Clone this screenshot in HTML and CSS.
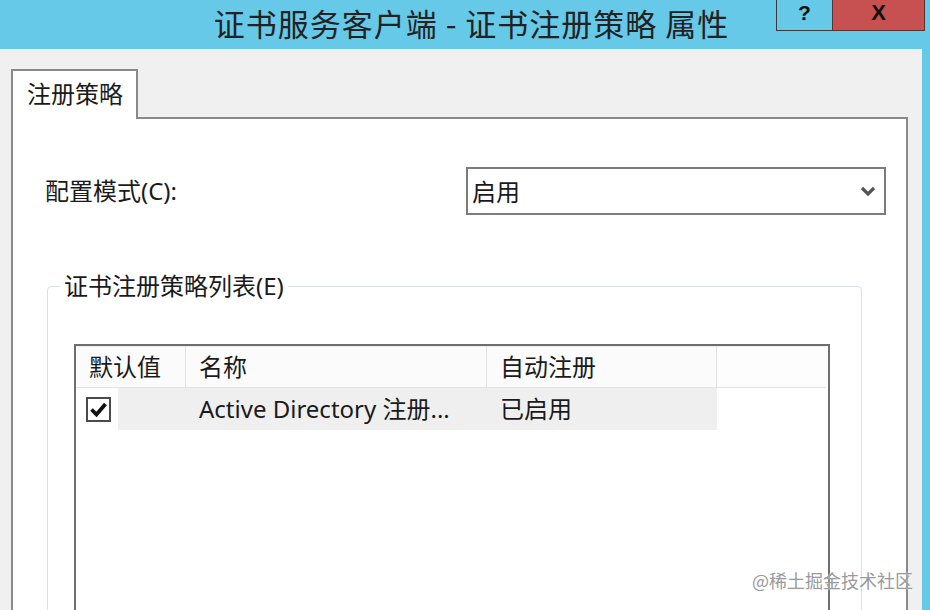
FILE: index.html
```html
<!DOCTYPE html>
<html lang="zh-CN">
<head>
<meta charset="utf-8">
<title>证书服务客户端 - 证书注册策略 属性</title>
<link rel="stylesheet" href="styles.css">
</head>
<body>
<div class="window">
  <div class="titlebar">
    <div class="title">证书服务客户端 - 证书注册策略 属性</div>
    <div class="caption-buttons">
      <div class="btn-help">?</div>
      <div class="btn-close">X</div>
    </div>
  </div>
  <div class="client">
    <div class="tabs">
      <div class="tab">注册策略</div>
    </div>
    <div class="panel">
      <div class="config-row">
        <span class="label">配置模式(C):</span>
        <div class="combo">
          <span class="combo-value">启用</span>
          <svg class="chevron" width="16" height="12" viewBox="0 0 16 12"><polyline points="2,3 8,9 14,3" fill="none" stroke="#555" stroke-width="3.2"/></svg>
        </div>
      </div>
      <fieldset class="group">
        <legend class="group-label">证书注册策略列表(E)</legend>
        <div class="listview">
          <div class="lv-header">
            <div class="hcell c1">默认值</div>
            <div class="hcell c2">名称</div>
            <div class="hcell c3">自动注册</div>
            <div class="hcell rest"></div>
          </div>
          <div class="lv-row">
            <div class="cell c1 check-cell">
              <svg class="checkbox" width="25" height="25" viewBox="0 0 25 25">
                <rect x="1" y="1" width="23" height="23" fill="#fff" stroke="#4a4a4a" stroke-width="2"/>
                <polyline points="5.5,12.5 10.5,17.5 19.5,7" fill="none" stroke="#111" stroke-width="3.8"/>
              </svg>
            </div>
            <div class="cell c2 sel">Active Directory 注册...</div>
            <div class="cell c3 sel">已启用</div>
          </div>
        </div>
      </fieldset>
    </div>
  </div>
  <div class="watermark">@稀土掘金技术社区</div>
</div>
</body>
</html>
```
FILE: styles.css
```css
html, body {
  margin: 0;
  padding: 0;
  width: 930px;
  height: 610px;
  overflow: hidden;
  background: #f0f0f0;
  font-family: "Noto Sans", "Noto Sans CJK SC", sans-serif;
  color: #1a1a1a;
}

.window {
  position: relative;
  width: 930px;
  height: 610px;
  overflow: hidden;
  display: flex;
  flex-direction: column;
}

.titlebar {
  flex: none;
  height: 49px;
  background: #66c9e8;
  display: flex;
  align-items: flex-start;
  padding-right: 5px;
}

.title {
  flex: 1;
  padding-left: 167px;
  text-align: center;
  font-family: "Noto Sans CJK SC", sans-serif;
  font-size: 31px;
  line-height: 45px;
  color: #222;
  letter-spacing: 1px;
  white-space: nowrap;
}

.caption-buttons {
  display: flex;
  height: 31px;
}

.btn-help {
  width: 55px;
  height: 30px;
  border: 1px solid #3a3a3a;
  border-top: none;
  border-right: none;
  text-align: center;
  font-family: "Liberation Sans", sans-serif;
  font-weight: bold;
  font-size: 21px;
  line-height: 26px;
  color: #111;
}

.btn-close {
  width: 91px;
  height: 30px;
  background: #c75050;
  border: 1px solid #5a3434;
  border-top: none;
  text-align: center;
  font-family: "Liberation Sans", sans-serif;
  font-weight: bold;
  font-size: 22px;
  line-height: 26px;
  color: #111;
}

.client {
  flex: none;
  height: 620px;
  display: flex;
  flex-direction: column;
  padding: 20px 14px 0 11px;
  border-right: 8px solid #66c9e8;
}

.tabs {
  display: flex;
  position: relative;
  z-index: 1;
}

.tab {
  box-sizing: border-box;
  width: 127px;
  height: 50px;
  margin-bottom: -2px;
  background: #fff;
  border: 2px solid #8a8a8a;
  border-bottom: none;
  padding-left: 14px;
  font-family: "Noto Sans CJK SC", sans-serif;
  font-size: 24px;
  line-height: 44px;
}

.panel {
  flex: 1;
  background: #fff;
  border: 2px solid #8a8a8a;
  padding: 48px 20px 0 32px;
}

.config-row {
  display: flex;
  justify-content: space-between;
  align-items: center;
}

.label {
  font-size: 24px;
  line-height: 30px;
}

.combo {
  width: 420px;
  height: 48px;
  box-sizing: border-box;
  border: 2px solid #7c7c7c;
  display: flex;
  align-items: center;
  justify-content: space-between;
  padding: 0 8px 0 4px;
}

.combo-value {
  font-family: "Noto Sans CJK SC", sans-serif;
  font-size: 24px;
  line-height: 30px;
}

.chevron {
  display: block;
}

.group {
  margin: 56px 24px 0 2px;
  padding: 0;
  border: 1px solid #d9dfe3;
  border-radius: 4px;
  min-width: 0;
}

.group-label {
  margin-left: 12px;
  padding: 0 4px;
  font-size: 24px;
  line-height: 30px;
}

.listview {
  margin: 43px 31px 0 26px;
  height: 320px;
  border: 2px solid #6e6e6e;
  background: #fff;
}

.lv-header {
  display: flex;
  height: 41px;
  border-bottom: 1px solid #e3e3e3;
  margin-right: 2px;
}

.hcell {
  box-sizing: border-box;
  padding-left: 13px;
  font-size: 24px;
  line-height: 40px;
  background: #fbfbfb;
  border-top: 1px solid #eeeeee;
  border-right: 1px solid #e1e1e1;
}

.hcell.rest {
  flex: 1;
  border-right: none;
  background: #fdfdfd;
}

.c1 { width: 110px; }
.c2 { width: 301px; }
.c3 { width: 230px; }

.lv-row {
  display: flex;
  height: 42px;
}

.cell {
  box-sizing: border-box;
  padding-left: 13px;
  font-size: 24px;
  line-height: 42px;
  white-space: nowrap;
}

.sel {
  background: #efefef;
}

.check-cell {
  padding-left: 10px;
  display: flex;
  align-items: center;
  background: linear-gradient(to right, #fff 42px, #efefef 42px);
}

.checkbox {
  display: block;
}

.watermark {
  position: absolute;
  left: 752px;
  top: 568px;
  font-family: "Noto Sans CJK SC", sans-serif;
  font-size: 18px;
  line-height: 24px;
  color: #9a9a9a;
  text-shadow: 0 0 2px #fff;
}
```
